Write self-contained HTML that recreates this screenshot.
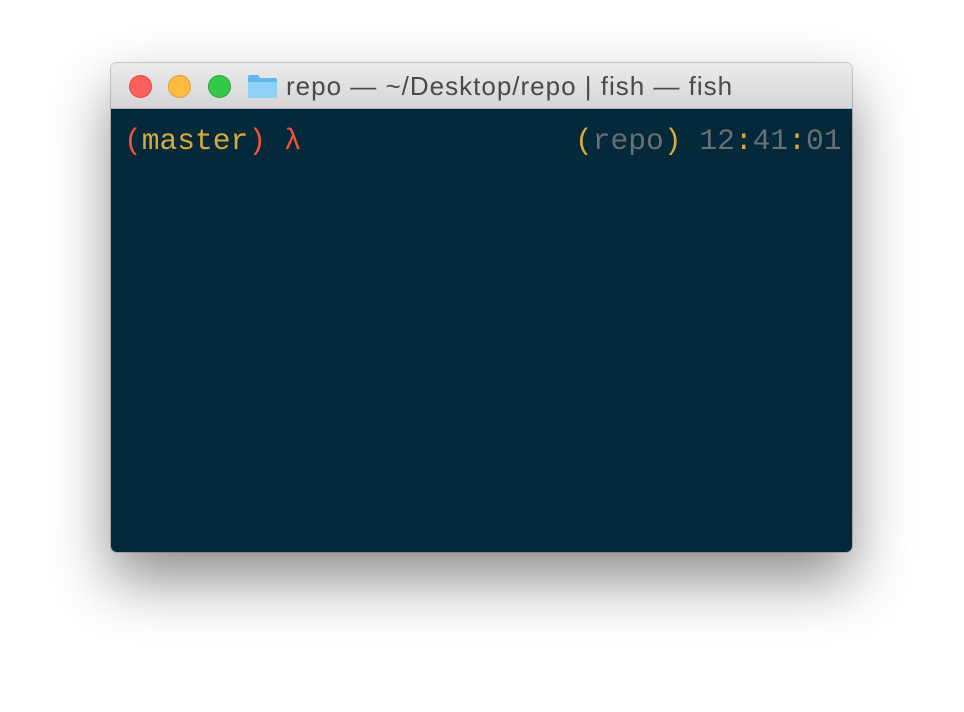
<!DOCTYPE html>
<html><head><style>
body{margin:0;width:964px;height:712px;background:#fff;position:relative;overflow:hidden}
.win{position:absolute;left:111px;top:63px;width:741px;height:489px;border-radius:6px;overflow:hidden;box-shadow:0 28px 60px rgba(0,0,0,.45),0 0 0 1px rgba(0,0,0,.18)}
.tb{position:absolute;left:0;top:0;width:100%;height:45px;background:linear-gradient(#ebebeb,#d5d5d5);border-bottom:1px solid #b0b0b0}
.d{position:absolute;top:12px;width:22px;height:22px;border-radius:50%}
.title{position:absolute;left:175px;top:8px;font:26px "Liberation Sans",sans-serif;color:#4a4a4a;white-space:nowrap;letter-spacing:1px}
.term{position:absolute;left:0;top:46px;width:100%;bottom:0;background:#03293a}
.t{position:absolute;top:15px;font:29.6px "Liberation Mono","DejaVu Sans Mono",monospace;white-space:pre}
</style></head><body>
<div class="win">
<div class="tb">
<div class="d" style="left:18px;background:#fc605b;border:1px solid #de4a45;width:21px;height:21px"></div>
<div class="d" style="left:57px;background:#fdbc40;border:1px solid #dea236;width:21px;height:21px"></div>
<div class="d" style="left:97px;background:#34c84a;border:1px solid #27a83a;width:21px;height:21px"></div>
<svg style="position:absolute;left:136px;top:11px" width="31" height="25" viewBox="0 0 31 25"><path d="M1 3 Q1 1 3 1 H11 L13 4 H28 Q30 4 30 6 V22 Q30 24 28 24 H3 Q1 24 1 22Z" fill="#5fb7ec"/><path d="M1 8 H30 V22 Q30 24 28 24 H3 Q1 24 1 22Z" fill="#8fd0f7"/></svg>
<div class="title">repo — ~/Desktop/repo | fish — fish</div>
</div>
<div class="term">
<div class="t" style="left:13px"><span style="color:#f0523a">(</span><span style="color:#d9a93a">master</span><span style="color:#f0523a">) λ</span></div>
<div class="t" style="left:464px"><span style="color:#d9a93a">(</span><span style="color:#6b6f73">repo</span><span style="color:#d9a93a">)</span> <span style="color:#6b6f73">12</span><span style="color:#d9a93a">:</span><span style="color:#6b6f73">41</span><span style="color:#d9a93a">:</span><span style="color:#6b6f73">01</span></div>
</div>
</div>
</body></html>
